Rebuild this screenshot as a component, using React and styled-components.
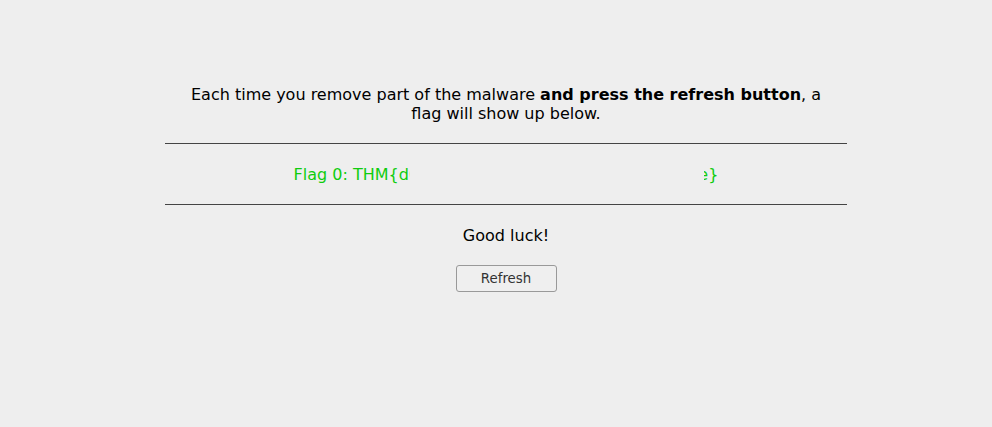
import React from "react";
import styled, { createGlobalStyle } from "styled-components";

const Global = createGlobalStyle`
  html, body { margin: 0; padding: 0; background: #eeeeee; }
  body { font-family: "DejaVu Sans", Verdana, sans-serif; color: #000; }
`;

const Page = styled.main`
  padding: 85px 0 0 20px;
  display: flex;
  flex-direction: column;
  align-items: center;
  font-size: 16px;
  line-height: 19px;
`;

const Intro = styled.p`
  max-width: 650px;
  margin: 0;
  text-align: center;
`;

const Rule = styled.hr`
  width: 682px;
  margin: ${(p) => p.$top}px 0 0;
  border: 0;
  border-top: 1px solid #444;
  height: 0;
`;

const FlagRow = styled.div`
  margin-top: 21px;
  margin-bottom: 20px;
  text-align: center;
`;

const Flag = styled.span`
  position: relative;
  display: inline-block;
  color: #0fcc0f;
  white-space: nowrap;
`;

const Redact = styled.span`
  position: absolute;
  top: 0;
  bottom: 0;
  left: 116px;
  right: 14px;
  background: #eeeeee;
`;

const Luck = styled.p`
  margin: 21px 0 0;
  text-align: center;
`;

const Button = styled.button`
  margin-top: 20px;
  width: 101px;
  height: 27px;
  padding: 0;
  font-family: "DejaVu Sans", Verdana, sans-serif;
  font-size: 13.33px;
  color: #333;
  background: #efefef;
  border: 1px solid #999;
  border-radius: 3px;
`;

export default function App() {
  return (
    <>
      <Global />
      <Page>
        <Intro>
          Each time you remove part of the malware <b>and press the refresh button</b>, a flag will show up below.
        </Intro>
        <Rule $top={20} />
        <FlagRow>
          <Flag>
            Flag 0: THM{"{"}d000000000000i0000000000000000e{"}"}
            <Redact />
          </Flag>
        </FlagRow>
        <Rule $top={0} />
        <Luck>Good luck!</Luck>
        <Button>Refresh</Button>
      </Page>
    </>
  );
}
